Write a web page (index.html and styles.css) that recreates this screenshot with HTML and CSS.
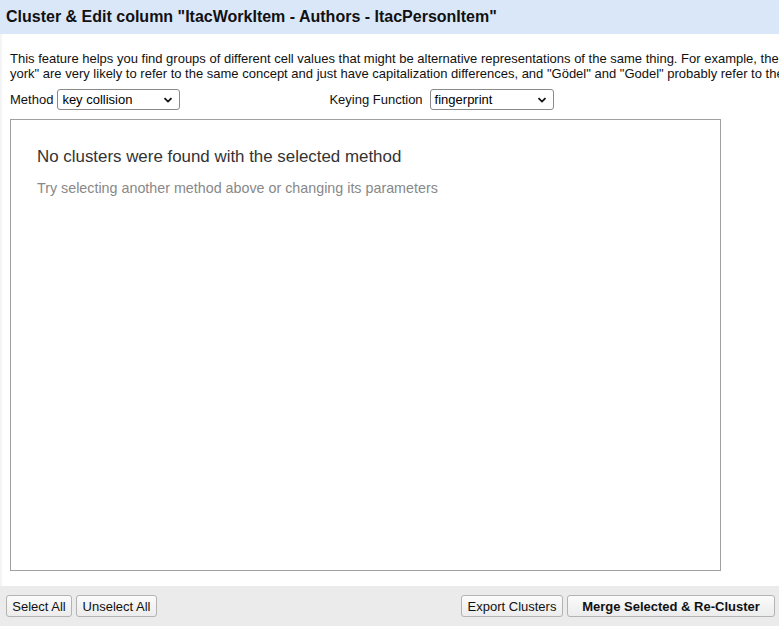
FILE: index.html
```html
<!DOCTYPE html>
<html>
<head>
<meta charset="utf-8">
<link rel="stylesheet" href="styles.css">
</head>
<body>
<div class="dialog">
  <div class="header">Cluster &amp; Edit column "ItacWorkItem - Authors - ItacPersonItem"</div>
  <div class="content">
    <p class="desc">This feature helps you find groups of different cell values that might be alternative representations of the same thing. For example, the two strings "New York" and "new<br>york" are very likely to refer to the same concept and just have capitalization differences, and "Gödel" and "Godel" probably refer to the same person.</p>
    <div class="controls">
      <label class="field">Method
        <span class="select method"><span>key collision</span><svg viewBox="0 0 10 10" width="10" height="10"><path d="M1.5 3.2 L5 6.6 L8.5 3.2" fill="none" stroke="#111" stroke-width="1.8"/></svg></span>
      </label>
      <label class="field keying">Keying Function
        <span class="select keyfn"><span>fingerprint</span><svg viewBox="0 0 10 10" width="10" height="10"><path d="M1.5 3.2 L5 6.6 L8.5 3.2" fill="none" stroke="#111" stroke-width="1.8"/></svg></span>
      </label>
    </div>
    <div class="results">
      <div class="empty-title">No clusters were found with the selected method</div>
      <div class="empty-hint">Try selecting another method above or changing its parameters</div>
    </div>
  </div>
  <div class="footer">
    <div class="group">
      <button class="btn w-select">Select All</button>
      <button class="btn w-unselect">Unselect All</button>
    </div>
    <div class="group">
      <button class="btn w-export">Export Clusters</button>
      <button class="btn btn-primary w-merge">Merge Selected &amp; Re-Cluster</button>
    </div>
  </div>
</div>
</body>
</html>
```
FILE: styles.css
```css
html, body {
  margin: 0;
  padding: 0;
  width: 779px;
  height: 626px;
  overflow: hidden;
  background: #ffffff;
  font-family: "Liberation Sans", Arial, sans-serif;
  color: #111;
}
.dialog {
  width: 779px;
  height: 626px;
  display: flex;
  flex-direction: column;
  box-shadow: inset 3px 0 3px -2px rgba(0,0,0,0.08);
}
.header {
  height: 34px;
  line-height: 33px;
  padding: 0 6px;
  background: #dae7f9;
  font-size: 16px;
  font-weight: bold;
  color: #111;
  white-space: nowrap;
}
.content {
  flex: 1;
  padding: 0 10px;
}
.desc {
  margin: 17px 0 0 0;
  font-size: 13px;
  line-height: 15px;
  white-space: nowrap;
  color: #111;
}
.controls {
  display: flex;
  align-items: center;
  margin-top: 8px;
  font-size: 13px;
}
.field {
  display: flex;
  align-items: center;
  gap: 4px;
}
.keying {
  margin-left: 149px;
  gap: 7px;
}
.select {
  box-sizing: border-box;
  height: 21px;
  border: 1px solid #8a8a8a;
  border-radius: 3px;
  background: #fff;
  display: flex;
  align-items: center;
  justify-content: space-between;
  padding: 0 6px 0 4px;
  font-size: 13px;
  color: #000;
}
.method { width: 123px; }
.keyfn { width: 124px; }
.results {
  box-sizing: border-box;
  margin-top: 9px;
  width: 711px;
  height: 452px;
  border: 1px solid #a0a0a0;
  padding: 27px 26px;
}
.empty-title {
  font-size: 16.9px;
  color: #333;
  line-height: 19px;
}
.empty-hint {
  margin-top: 14px;
  font-size: 14.3px;
  color: #888;
  line-height: 17px;
}
.footer {
  height: 40px;
  background: #ebebeb;
  display: flex;
  justify-content: space-between;
  align-items: flex-start;
  padding: 9px 4px 0 6px;
  box-sizing: border-box;
}
.group {
  display: flex;
  gap: 4px;
}
.btn {
  box-sizing: border-box;
  height: 22px;
  border: 1px solid #b3b3b3;
  border-radius: 3px;
  background: linear-gradient(#fbfbfb, #ececec);
  font-family: "Liberation Sans", Arial, sans-serif;
  font-size: 13px;
  color: #111;
  padding: 0;
  text-align: center;
}
.btn-primary { font-weight: bold; }
.w-select { width: 66px; }
.w-unselect { width: 81px; }
.w-export { width: 102px; }
.w-merge { width: 208px; }
```
